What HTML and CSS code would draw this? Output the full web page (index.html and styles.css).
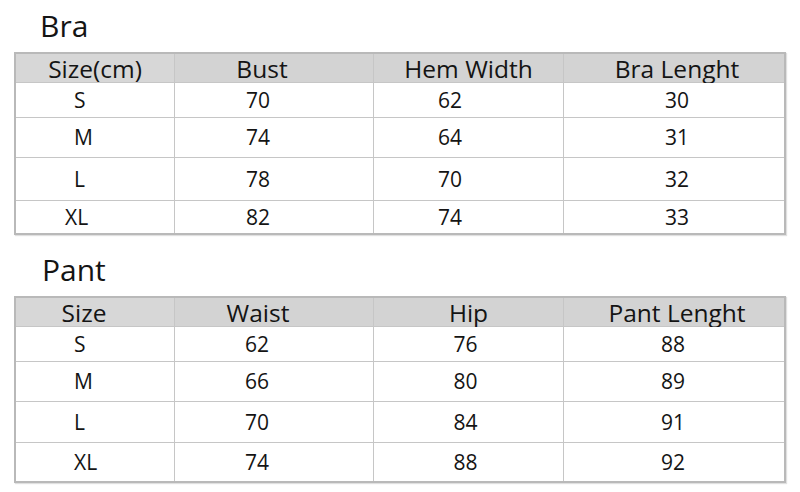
FILE: index.html
```html
<!DOCTYPE html>
<html>
<head>
<meta charset="utf-8">
<link rel="stylesheet" href="styles.css">
</head>
<body>
<div class="page">
  <h2 class="title title-bra">Bra</h2>
  <div class="chart bra">
    <div class="cell head h1">Size(cm)</div>
    <div class="cell head h2">Bust</div>
    <div class="cell head h3">Hem Width</div>
    <div class="cell head h4">Bra Lenght</div>

    <div class="cell d1">S</div>
    <div class="cell d2">70</div>
    <div class="cell d3">62</div>
    <div class="cell d4">30</div>

    <div class="cell d1">M</div>
    <div class="cell d2">74</div>
    <div class="cell d3">64</div>
    <div class="cell d4">31</div>

    <div class="cell d1">L</div>
    <div class="cell d2">78</div>
    <div class="cell d3">70</div>
    <div class="cell d4">32</div>

    <div class="cell d1 xl">XL</div>
    <div class="cell d2">82</div>
    <div class="cell d3">74</div>
    <div class="cell d4">33</div>
  </div>

  <h2 class="title title-pant">Pant</h2>
  <div class="chart pant">
    <div class="cell head h1">Size</div>
    <div class="cell head h2">Waist</div>
    <div class="cell head h3">Hip</div>
    <div class="cell head h4">Pant Lenght</div>

    <div class="cell d1">S</div>
    <div class="cell d2">62</div>
    <div class="cell d3">76</div>
    <div class="cell d4">88</div>

    <div class="cell d1">M</div>
    <div class="cell d2">66</div>
    <div class="cell d3">80</div>
    <div class="cell d4">89</div>

    <div class="cell d1">L</div>
    <div class="cell d2">70</div>
    <div class="cell d3">84</div>
    <div class="cell d4">91</div>

    <div class="cell d1">XL</div>
    <div class="cell d2">74</div>
    <div class="cell d3">88</div>
    <div class="cell d4">92</div>
  </div>
</div>
</body>
</html>
```

FILE: styles.css
```css
html, body {
  margin: 0;
  padding: 0;
  background: #ffffff;
}

.page {
  width: 800px;
  height: 492px;
  display: flex;
  flex-direction: column;
  font-family: "Open Sans", "Noto Sans", sans-serif;
  color: #141414;
}

.title {
  margin: 0;
  font-weight: 400;
  font-size: 30px;
  line-height: 30px;
  height: 30px;
}

.title-bra {
  margin-top: 11px;
  margin-bottom: 11px;
  padding-left: 40px;
}

.title-pant {
  margin-top: 20px;
  margin-bottom: 11px;
  padding-left: 42px;
}

.chart {
  margin-left: 14px;
  width: 768px;
  display: grid;
  grid-template-columns: 158px 198px 189px 220px;
  gap: 1px;
  background: #c6c6c6;
  border: 2px solid #b9b9b9;
  box-shadow: 1px 1px 1px rgba(0, 0, 0, 0.12);
}

.bra {
  grid-template-rows: 28px 34px 39px 42px 32px;
}

.pant {
  grid-template-rows: 28px 34px 39px 40px 38px;
}

.cell {
  background: #ffffff;
  display: flex;
  align-items: center;
  justify-content: center;
  font-size: 21px;
  line-height: 1;
  box-sizing: border-box;
}

.head {
  background: #d3d3d3;
  font-size: 24.5px;
  padding-top: 2px;
}

.head.h1 {
  background: #d7d7d7;
}

.d1 {
  justify-content: flex-start;
  padding-left: 58px;
}

.bra .d1.xl {
  padding-left: 49px;
}

.bra .h2 { padding-right: 24px; }
.pant .h2 { padding-right: 32px; }
.pant .h1 { padding-right: 22px; }
.h4 { padding-left: 6px; }

.bra .d2 { padding-right: 32px; }
.pant .d2 { padding-right: 34px; }

.bra .d3 { padding-right: 37px; }
.pant .d3 { padding-right: 6px; }

.bra .d4 { padding-left: 6px; }
.pant .d4 { padding-right: 2px; }
```
